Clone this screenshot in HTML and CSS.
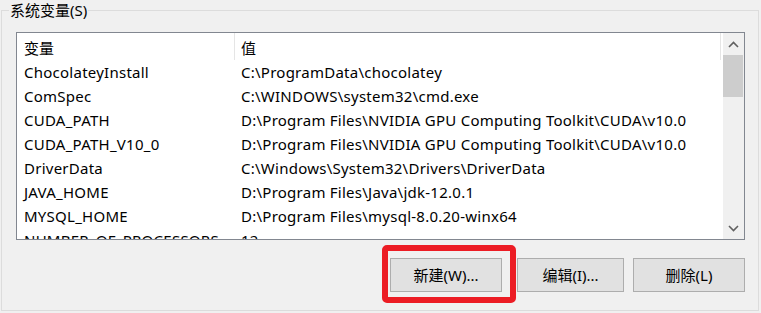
FILE: index.html
```html
<!DOCTYPE html>
<html lang="zh-CN">
<head>
<meta charset="utf-8">
<title>系统变量</title>
<link rel="stylesheet" href="styles.css">
</head>
<body>
<div class="group">
  <span class="legend">系统变量(S)</span>
  <div class="list">
    <div class="table">
      <div class="head"><div class="c1">变量</div><div class="c2">值</div></div>
      <div class="row"><div class="c1">ChocolateyInstall</div><div class="c2">C:\ProgramData\chocolatey</div></div>
      <div class="row"><div class="c1">ComSpec</div><div class="c2">C:\WINDOWS\system32\cmd.exe</div></div>
      <div class="row"><div class="c1">CUDA_PATH</div><div class="c2">D:\Program Files\NVIDIA GPU Computing Toolkit\CUDA\v10.0</div></div>
      <div class="row"><div class="c1">CUDA_PATH_V10_0</div><div class="c2">D:\Program Files\NVIDIA GPU Computing Toolkit\CUDA\v10.0</div></div>
      <div class="row"><div class="c1">DriverData</div><div class="c2">C:\Windows\System32\Drivers\DriverData</div></div>
      <div class="row"><div class="c1">JAVA_HOME</div><div class="c2">D:\Program Files\Java\jdk-12.0.1</div></div>
      <div class="row"><div class="c1">MYSQL_HOME</div><div class="c2">D:\Program Files\mysql-8.0.20-winx64</div></div>
      <div class="row"><div class="c1">NUMBER_OF_PROCESSORS</div><div class="c2">12</div></div>
    </div>
    <div class="scroll">
      <div class="arrow"><svg width="11" height="7" viewBox="0 0 11 7"><path d="M1 6 L5.5 1.5 L10 6" fill="none" stroke="#606060" stroke-width="1.6"/></svg></div>
      <div class="thumb"></div>
      <div class="track"></div>
      <div class="arrow"><svg width="11" height="7" viewBox="0 0 11 7"><path d="M1 1 L5.5 5.5 L10 1" fill="none" stroke="#606060" stroke-width="1.6"/></svg></div>
    </div>
  </div>
  <div class="buttons">
    <div class="mark-wrap">
      <button class="btn b1">新建(W)...</button>
      <span class="mark"></span>
    </div>
    <button class="btn b2">编辑(I)...</button>
    <button class="btn b3">删除(L)</button>
  </div>
</div>
</body>
</html>
```

FILE: styles.css
```css
html, body {
  margin: 0;
  padding: 0;
}
body {
  width: 761px;
  height: 313px;
  overflow: hidden;
  background: #f0f0f0;
  font-family: "Noto Sans", "Noto Sans CJK SC", sans-serif;
  font-size: 15px;
  color: #000;
}
.group {
  position: relative;
  box-sizing: border-box;
  margin: 10px 0 0 1px;
  width: 758px;
  height: 301px;
  border: 1px solid #dcdcdc;
  padding: 21px 0 0 14px;
}
.legend {
  position: absolute;
  left: 7px;
  top: -11px;
  padding: 0 1px;
  background: #f0f0f0;
  line-height: 20px;
}
.list {
  display: flex;
  box-sizing: border-box;
  width: 729px;
  height: 208px;
  border: 1px solid #828790;
  background: #fff;
  overflow: hidden;
}
.table {
  width: 706px;
  flex: none;
  overflow: hidden;
}
.head, .row {
  display: flex;
  white-space: nowrap;
}
.head {
  height: 27px;
  box-sizing: border-box;
  padding-top: 3px;
  line-height: 24px;
}
.head .c1 {
  border-right: 1px solid #e5e5e5;
  margin-top: -3px;
  padding-top: 3px;
}
.head .c2 {
  width: 486px;
  flex: none;
  box-sizing: border-box;
  border-right: 1px solid #e5e5e5;
  margin-top: -3px;
  padding-top: 3px;
}
.row {
  height: 24px;
  line-height: 24px;
  letter-spacing: 0.25px;
}
.c1 {
  width: 218px;
  flex: none;
  box-sizing: border-box;
  padding-left: 7px;
  overflow: hidden;
}
.c2 {
  padding-left: 6px;
}
.scroll {
  width: 21px;
  flex: none;
  display: flex;
  flex-direction: column;
  background: #f0f0f0;
}
.arrow {
  height: 22px;
  display: flex;
  align-items: center;
  justify-content: center;
}
.thumb {
  height: 42px;
  margin-right: 1px;
  background: #cdcdcd;
}
.track {
  flex: 1;
}
.buttons {
  display: flex;
  justify-content: flex-end;
  width: 729px;
  margin-top: 18px;
}
.mark-wrap {
  position: relative;
  display: flex;
}
.btn {
  box-sizing: border-box;
  height: 34px;
  border: 1px solid #adadad;
  background: #e1e1e1;
  font-family: inherit;
  font-size: 15px;
  color: #000;
  padding: 0;
  line-height: 32px;
}
.b1 { width: 112px; }
.b2 { width: 107px; margin-left: 15px; }
.b3 { width: 112px; margin-left: 9px; }
.mark {
  position: absolute;
  left: -8px;
  top: -13px;
  width: 134px;
  height: 58px;
  box-sizing: border-box;
  border: 6px solid #ec1c24;
  border-radius: 5px;
}
```
